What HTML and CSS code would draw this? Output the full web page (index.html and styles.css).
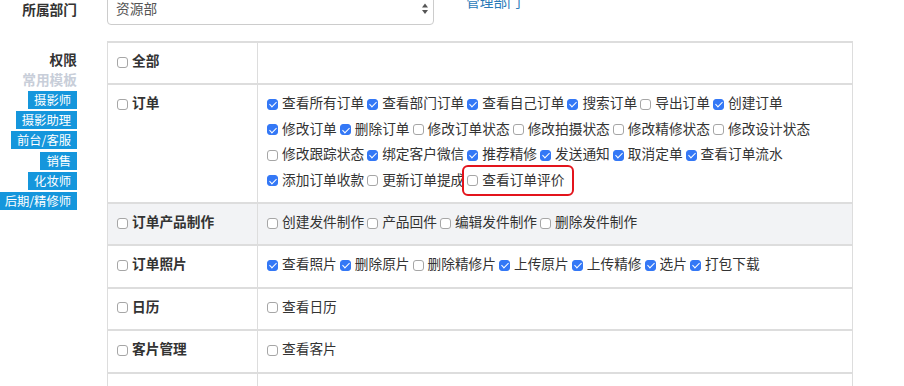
FILE: index.html
```html
<!DOCTYPE html>
<html lang="zh-CN">

<head>
    <meta charset="UTF-8">
    <meta name="viewport" content="width=device-width, initial-scale=1.0">
    <title>员工权限</title>
    <link rel="stylesheet" href="styles.css">
</head>

<body>
    <form class="form">
        <div class="group dept">
            <label class="label">所属部门</label>
            <div class="select">
                <span>资源部</span>
                <svg class="arrows" width="8" height="13" viewBox="0 0 8 13">
                    <path d="M4 1.5L7 5.5H1Z" />
                    <path d="M4 12L7 8H1Z" />
                </svg>
            </div>
            <a class="link" href="#">管理部门</a>
        </div>
        <div class="group">
            <div class="label side">
                <div>权限</div>
                <div class="tpl-title">常用模板</div>
                <span class="tpl">摄影师</span>
                <span class="tpl">摄影助理</span>
                <span class="tpl">前台/客服</span>
                <span class="tpl">销售</span>
                <span class="tpl">化妆师</span>
                <span class="tpl">后期/精修师</span>
            </div>
            <table class="perm">
                <colgroup>
                    <col class="col-name">
                    <col>
                </colgroup>
                <tr>
                    <td class="name"><label><input type="checkbox">全部</label></td>
                    <td></td>
                </tr>
                <tr>
                    <td class="name"><label><input type="checkbox">订单</label></td>
                    <td>
                        <div class="items">
                            <label class="item"><input type="checkbox" checked>查看所有订单</label>
                            <label class="item"><input type="checkbox" checked>查看部门订单</label>
                            <label class="item"><input type="checkbox" checked>查看自己订单</label>
                            <label class="item"><input type="checkbox" checked>搜索订单</label>
                            <label class="item"><input type="checkbox">导出订单</label>
                            <label class="item"><input type="checkbox" checked>创建订单</label>
                            <label class="item"><input type="checkbox" checked>修改订单</label>
                            <label class="item"><input type="checkbox" checked>删除订单</label>
                            <label class="item"><input type="checkbox">修改订单状态</label>
                            <label class="item"><input type="checkbox">修改拍摄状态</label>
                            <label class="item"><input type="checkbox">修改精修状态</label>
                            <label class="item"><input type="checkbox">修改设计状态</label>
                            <label class="item"><input type="checkbox">修改跟踪状态</label>
                            <label class="item"><input type="checkbox" checked>绑定客户微信</label>
                            <label class="item"><input type="checkbox" checked>推荐精修</label>
                            <label class="item"><input type="checkbox" checked>发送通知</label>
                            <label class="item"><input type="checkbox" checked>取消定单</label>
                            <label class="item"><input type="checkbox" checked>查看订单流水</label>
                            <label class="item"><input type="checkbox" checked>添加订单收款</label>
                            <label class="item"><input type="checkbox">更新订单提成</label>
                            <label class="item mark"><input type="checkbox">查看订单评价</label>
                        </div>
                    </td>
                </tr>
                <tr class="hl">
                    <td class="name"><label><input type="checkbox">订单产品制作</label></td>
                    <td>
                        <div class="items">
                            <label class="item"><input type="checkbox">创建发件制作</label>
                            <label class="item"><input type="checkbox">产品回件</label>
                            <label class="item"><input type="checkbox">编辑发件制作</label>
                            <label class="item"><input type="checkbox">删除发件制作</label>
                        </div>
                    </td>
                </tr>
                <tr>
                    <td class="name"><label><input type="checkbox">订单照片</label></td>
                    <td>
                        <div class="items">
                            <label class="item"><input type="checkbox" checked>查看照片</label>
                            <label class="item"><input type="checkbox" checked>删除原片</label>
                            <label class="item"><input type="checkbox">删除精修片</label>
                            <label class="item"><input type="checkbox" checked>上传原片</label>
                            <label class="item"><input type="checkbox" checked>上传精修</label>
                            <label class="item"><input type="checkbox" checked>选片</label>
                            <label class="item"><input type="checkbox" checked>打包下载</label>
                        </div>
                    </td>
                </tr>
                <tr>
                    <td class="name"><label><input type="checkbox">日历</label></td>
                    <td>
                        <div class="items">
                            <label class="item"><input type="checkbox">查看日历</label>
                        </div>
                    </td>
                </tr>
                <tr>
                    <td class="name"><label><input type="checkbox">客片管理</label></td>
                    <td>
                        <div class="items">
                            <label class="item"><input type="checkbox">查看客片</label>
                        </div>
                    </td>
                </tr>
                <tr>
                    <td class="name">&nbsp;</td>
                    <td>&nbsp;</td>
                </tr>
            </table>
        </div>
    </form>
</body>

</html>
```

FILE: styles.css
```css
* {
    box-sizing: border-box;
}

body {
    margin: 0;
    font-family: "Noto Sans CJK SC", "Noto Sans", sans-serif;
    font-size: 13.7px;
    color: #333;
    overflow: hidden;
}

.form {
    margin-top: -9px;
}

.group {
    display: flex;
    gap: 30px;
}

.dept {
    margin-bottom: 16px;
}

.label {
    width: 77px;
    flex-shrink: 0;
    padding-top: 8px;
    line-height: 20px;
    text-align: right;
    font-weight: bold;
}

.select {
    display: flex;
    align-items: center;
    justify-content: space-between;
    width: 327px;
    height: 34px;
    padding: 0 4px 0 8px;
    border: 1px solid #ccc;
    border-radius: 4px;
    color: #555;
}

.arrows {
    fill: #555;
}

.link {
    align-self: flex-start;
    margin-left: 2px;
    line-height: 20px;
    color: #2a7ab8;
    text-decoration: none;
}

.side {
    display: flex;
    flex-direction: column;
    align-items: flex-end;
}

.tpl-title {
    margin-bottom: 2px;
    color: #c8ced9;
}

.tpl {
    margin-bottom: 2.2px;
    padding: 0 6px;
    line-height: 18px;
    font-size: 12.3px;
    font-weight: normal;
    white-space: nowrap;
    color: #fff;
    background-color: #1596dc;
}

.perm {
    width: 746px;
    border-collapse: collapse;
}

.col-name {
    width: 150px;
}

.perm td {
    padding: 5px 8px 10px;
    line-height: 25.4px;
    vertical-align: top;
    border: 1px solid #ddd;
    border-top-width: 2px;
    border-bottom-width: 2px;
}

.perm td.name {
    font-weight: bold;
}

.perm tr.hl td {
    background-color: #f2f3f5;
}

.items {
    display: flex;
    flex-wrap: wrap;
    column-gap: 2px;
}

.item {
    white-space: nowrap;
}

input[type=checkbox] {
    appearance: none;
    position: relative;
    width: 11px;
    height: 11px;
    margin: 0 4px 0 1px;
    vertical-align: -1.5px;
    border: 1px solid #a6a6a6;
    border-radius: 3px;
    background-color: #fff;
}

input[type=checkbox]:checked {
    border-color: #3478f6;
    background-color: #3478f6;
}

input[type=checkbox]:checked::after {
    content: "";
    position: absolute;
    left: 3px;
    top: 0.5px;
    width: 3px;
    height: 6px;
    border: solid #fff;
    border-width: 0 1.5px 1.5px 0;
    transform: rotate(45deg);
}

.mark {
    position: relative;
}

.mark::after {
    content: "";
    position: absolute;
    left: -4px;
    right: -10px;
    top: -2px;
    bottom: -4px;
    border: 2px solid #e3141c;
    border-radius: 6px;
}
```
